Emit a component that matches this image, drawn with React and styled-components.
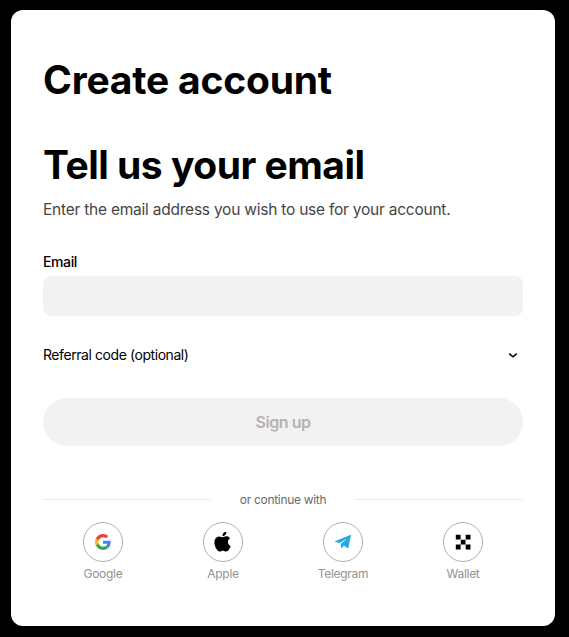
import React, { useState } from 'react';
import styled, { createGlobalStyle } from 'styled-components';

const COLORS = {
  black: '#000000',
  white: '#ffffff',
  field: '#f2f2f2',
  line: '#ebebeb',
  ring: '#b0b0b0',
  text: '#454545',
  hint: '#6b6b6b',
  muted: '#929292',
  disabled: '#b3b3b3',
  telegram: '#1fa9e8',
};

const GlobalStyle = createGlobalStyle`
  * {
    box-sizing: border-box;
  }

  body {
    margin: 0;
    background: ${COLORS.black};
    font-family: Inter, 'Liberation Sans', sans-serif;
    color: ${COLORS.black};
  }
`;

const Page = styled.main`
  min-height: 637px;
  padding: 10px 14px 11px 11px;
  background: ${COLORS.black};
`;

const Card = styled.section`
  height: 616px;
  padding: 46px 32px 0;
  border-radius: 12px;
  background: ${COLORS.white};
`;

const Title = styled.h1`
  margin: 0;
  font-size: 39px;
  line-height: 48px;
  font-weight: 650;
  letter-spacing: ${({ $spacing }) => $spacing};
  white-space: nowrap;
`;

const Form = styled.form`
  display: flex;
  flex-direction: column;
  margin-top: 37px;
`;

const Description = styled.p`
  margin: 9px 0 30px;
  font-size: 15.5px;
  line-height: 24px;
  letter-spacing: -0.23px;
  color: ${COLORS.text};
  white-space: nowrap;
`;

const Label = styled.label`
  font-size: 14px;
  line-height: 20px;
  font-weight: 500;
  letter-spacing: -0.4px;
`;

const Input = styled.input`
  width: 100%;
  height: 40px;
  margin-top: 4px;
  padding: 0 12px;
  border: none;
  border-radius: 8px;
  background: ${COLORS.field};
  font: inherit;
  outline: none;
`;

const Referral = styled.button`
  display: flex;
  align-items: center;
  justify-content: space-between;
  height: 20px;
  margin: 29px 0 33px;
  padding: 0 5px 0 0;
  border: none;
  background: none;
  color: ${COLORS.black};
  font-family: inherit;
  font-size: 14px;
  line-height: 20px;
  letter-spacing: -0.43px;
`;

const SubmitButton = styled.button`
  height: 48px;
  padding: 0 0 1px;
  border: none;
  border-radius: 24px;
  background: ${COLORS.field};
  color: ${COLORS.disabled};
  font-family: inherit;
  font-size: 16px;
  font-weight: 600;
  letter-spacing: -0.45px;
`;

const Divider = styled.div`
  display: flex;
  align-items: center;
  gap: 30px;
  margin-top: 45px;
  font-size: 12px;
  line-height: 17px;
  letter-spacing: -0.31px;
  color: ${COLORS.hint};
  white-space: nowrap;

  &::before,
  &::after {
    content: '';
    flex: 1;
    height: 1px;
    background: ${COLORS.line};
  }
`;

const Providers = styled.div`
  display: grid;
  grid-template-columns: repeat(4, 1fr);
  margin-top: 14px;
`;

const Provider = styled.div`
  display: flex;
  flex-direction: column;
  align-items: center;
  gap: 4px;
  font-size: 12px;
  line-height: 16px;
  letter-spacing: -0.28px;
  color: ${COLORS.muted};
`;

const ProviderButton = styled.button`
  display: flex;
  align-items: center;
  justify-content: center;
  width: 40px;
  height: 40px;
  padding: 0;
  border: 1px solid ${COLORS.ring};
  border-radius: 50%;
  background: ${COLORS.white};
`;

const Chevron = () => (
  <svg width="10" height="6" viewBox="0 0 10 6" fill="none">
    <path d="M1.2 1.7 5 4.8 8.8 1.7" stroke="#000" strokeWidth="1.5" />
  </svg>
);

const GoogleIcon = () => (
  <svg width="16" height="16" viewBox="0 0 48 48">
    <path fill="#EA4335" d="M24 9.5c3.54 0 6.71 1.22 9.21 3.6l6.85-6.85C35.9 2.38 30.47 0 24 0 14.62 0 6.51 5.38 2.56 13.22l7.98 6.19C12.43 13.72 17.74 9.5 24 9.5z" />
    <path fill="#4285F4" d="M46.98 24.55c0-1.57-.15-3.09-.38-4.55H24v9.02h12.94c-.58 2.96-2.26 5.48-4.78 7.18l7.73 6c4.51-4.18 7.09-10.36 7.09-17.65z" />
    <path fill="#FBBC05" d="M10.53 28.59c-.48-1.45-.76-2.99-.76-4.59s.27-3.14.76-4.59l-7.98-6.19C.92 16.46 0 20.12 0 24s.92 7.54 2.56 10.78l7.97-6.19z" />
    <path fill="#34A853" d="M24 48c6.48 0 11.93-2.13 15.89-5.81l-7.73-6c-2.15 1.45-4.92 2.3-8.16 2.3-6.26 0-11.57-4.22-13.47-9.91l-7.98 6.19C6.51 42.62 14.62 48 24 48z" />
  </svg>
);

const AppleIcon = () => (
  <svg width="20" height="20" viewBox="0.6 0.6 24 24">
    <path d="M12.152 6.896c-.948 0-2.415-1.078-3.96-1.04-2.04.027-3.91 1.183-4.961 3.014-2.117 3.675-.546 9.103 1.519 12.09 1.013 1.454 2.208 3.09 3.792 3.039 1.52-.065 2.09-.987 3.935-.987 1.831 0 2.35.987 3.96.948 1.637-.026 2.676-1.48 3.676-2.948 1.156-1.688 1.636-3.325 1.662-3.415-.039-.013-3.182-1.221-3.22-4.857-.026-3.04 2.48-4.494 2.597-4.559-1.429-2.09-3.623-2.324-4.39-2.376-2-.156-3.675 1.09-4.61 1.09zM15.53 3.83c.843-1.012 1.4-2.427 1.245-3.83-1.207.052-2.662.805-3.532 1.818-.78.896-1.454 2.338-1.273 3.714 1.338.104 2.715-.688 3.559-1.701" />
  </svg>
);

const TelegramIcon = () => (
  <svg width="16" height="14" viewBox="0 0 16 14" fill={COLORS.telegram}>
    <path d="M15.9.2 13.4 12.8c-.1.5-.6.6-1 .3L8.9 10.5l-2 2.4c-.3.4-.7.3-.8-.2L5.7 8.9l6.8-5.7-8 4.8L.6 7C-.2 6.7-.1 6.2.6 5.9L15.2.1c.4-.2.8-.2.7.1Z" />
  </svg>
);

const WalletIcon = () => (
  <svg width="16" height="16" viewBox="0 0 16 16">
    <path d="M.8.7h4.8v4.8H.8zM10.7.7h4.8v4.8h-4.8zM5.8 5.7h4.7v4.7H5.8zM.8 10.6h4.8v4.8H.8zM10.7 10.6h4.8v4.8h-4.8z" />
  </svg>
);

const PROVIDERS = [
  { name: 'Google', Icon: GoogleIcon },
  { name: 'Apple', Icon: AppleIcon },
  { name: 'Telegram', Icon: TelegramIcon },
  { name: 'Wallet', Icon: WalletIcon },
];

export default function App() {
  const [email, setEmail] = useState('');

  return (
    <>
      <GlobalStyle />
      <Page>
        <Card>
          <Title $spacing="-0.2px">Create account</Title>
          <Form onSubmit={(e) => e.preventDefault()}>
            <Title as="h2" $spacing="-0.5px">Tell us your email</Title>
            <Description>Enter the email address you wish to use for your account.</Description>
            <Label htmlFor="email">Email</Label>
            <Input
              id="email"
              type="email"
              value={email}
              onChange={(e) => setEmail(e.target.value)}
            />
            <Referral type="button">
              Referral code (optional)
              <Chevron />
            </Referral>
            <SubmitButton type="submit" disabled={!email}>
              Sign up
            </SubmitButton>
          </Form>
          <Divider>or continue with</Divider>
          <Providers>
            {PROVIDERS.map(({ name, Icon }) => (
              <Provider key={name}>
                <ProviderButton type="button" aria-label={name}>
                  <Icon />
                </ProviderButton>
                {name}
              </Provider>
            ))}
          </Providers>
        </Card>
      </Page>
    </>
  );
}
